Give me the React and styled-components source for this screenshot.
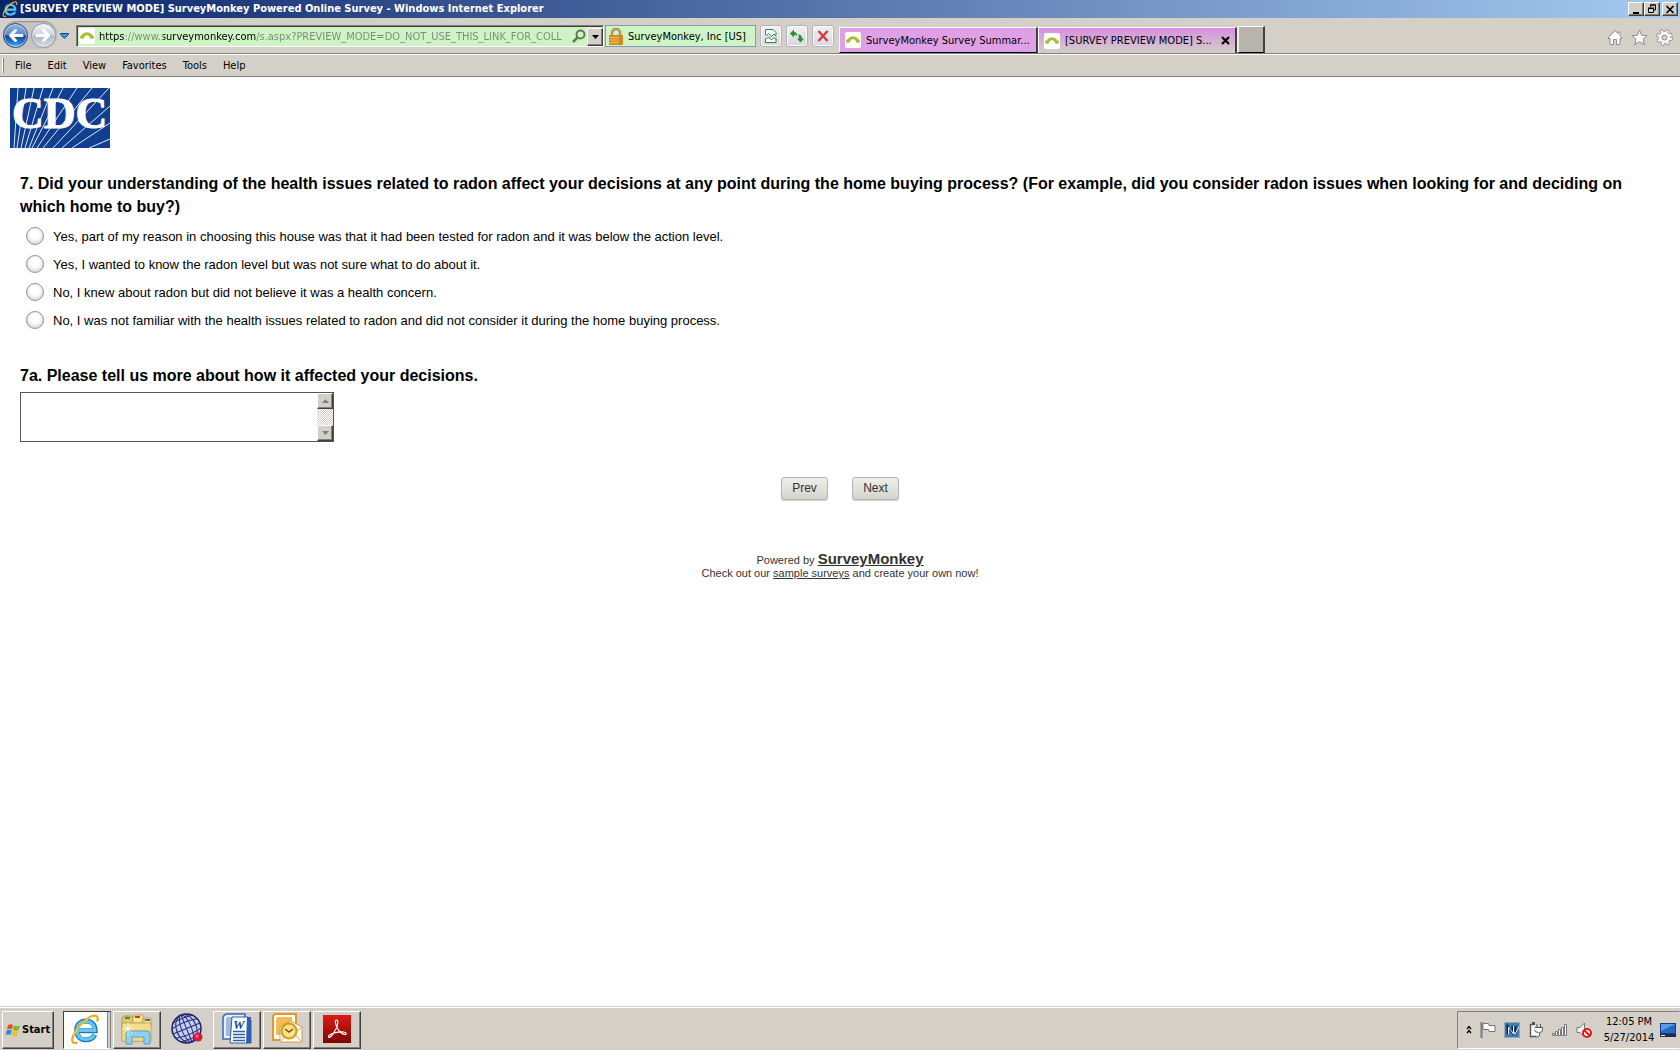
import React, { useState } from 'react';
import styled, { createGlobalStyle, css } from 'styled-components';

const GlobalStyle = createGlobalStyle`
  *, *::before, *::after {
    box-sizing: border-box;
  }

  body {
    margin: 0;
    background: #fff;
    color: #000;
    font-family: "Liberation Sans", Arial, sans-serif;
  }

  button, input, textarea {
    font: inherit;
    color: inherit;
    margin: 0;
  }

  svg {
    display: block;
    flex: none;
  }
`;

const tahoma = css`
  font-family: "DejaVu Sans Condensed", Tahoma, sans-serif;
`;

const raised = css`
  background: #d4d0c8;
  border: 1px solid;
  border-color: #fff #404040 #404040 #fff;
  box-shadow: inset -1px -1px 0 #808080;
`;

const Window = styled.div`
  display: flex;
  flex-direction: column;
  min-height: 100vh;
`;

const TitleBar = styled.header`
  ${tahoma}
  display: flex;
  align-items: center;
  height: 18px;
  padding: 0 2px;
  background: linear-gradient(90deg, #0a246a, #a6caf0);
  color: #fff;
`;

const WindowTitle = styled.h1`
  flex: 1;
  margin: 0 0 0 2px;
  font-size: 11px;
  line-height: 18px;
  white-space: nowrap;
`;

const CaptionButton = styled.button`
  ${raised}
  display: flex;
  align-items: center;
  justify-content: center;
  width: 16px;
  height: 14px;
  padding: 0;
  margin-left: ${props => (props.$apart ? '2px' : '0')};
`;

const NavBar = styled.div`
  ${tahoma}
  display: flex;
  align-items: flex-start;
  height: 36px;
  padding: 0 7px 0 3px;
  background: #d4d0c8;
  border-bottom: 1px solid #808080;
  font-size: 11px;
`;

const TravelButtons = styled.div`
  display: flex;
  align-items: center;
  gap: 3px;
  height: 28px;
  margin-top: 3px;
  padding-right: 1px;
  border-radius: 14px;
  background: #c6c4c2;
  box-shadow: inset 0 1px 1px #8e8e8e;
`;

const TravelButton = styled.button`
  display: flex;
  align-items: center;
  justify-content: center;
  width: 25px;
  height: 25px;
  padding: 0;
  border: 1px solid ${props => (props.$active ? '#2b4775' : '#8b95a3')};
  border-radius: 50%;
  background: ${props =>
    props.$active
      ? 'linear-gradient(#8fb4dc 0%, #5f8dcb 45%, #12439e 52%, #2d86d4 85%, #6cc4f2 100%)'
      : 'linear-gradient(#f4f6f8 0%, #cfd4dc 45%, #b0b7c3 52%, #d8dde5 100%)'};
  box-shadow: inset 0 0 0 1px rgba(255, 255, 255, 0.5);
`;

const HistoryButton = styled.button`
  width: 18px;
  height: 28px;
  margin: 4px 1px 0 0;
  padding: 0 3px;
  border: 0;
  background: none;
`;

const AddressBox = styled.div`
  display: flex;
  align-items: center;
  flex: 0 0 528px;
  height: 22px;
  margin-top: 7px;
  padding-left: 2px;
  border: 1px solid;
  border-color: #808080 #fff #fff #808080;
  box-shadow: inset 1px 1px 0 #404040;
  background: #cef3c4;
`;

/* host name is dark, the rest of the address is dimmed */
const AddressInput = styled.input`
  flex: 1;
  min-width: 0;
  height: 18px;
  margin: 0 6px 0 4px;
  padding: 0;
  border: 0;
  outline: none;
  color: transparent;
  background: linear-gradient(
    90deg,
    #000 26px, #7c8a78 26px,
    #7c8a78 64px, #000 64px,
    #000 157px, #7c8a78 157px
  );
  background-clip: text;
  -webkit-background-clip: text;
`;

const PlainIconButton = styled.button`
  display: flex;
  align-items: center;
  justify-content: center;
  padding: 0;
  border: 0;
  background: none;
`;

const DropButton = styled.button`
  ${raised}
  display: flex;
  align-items: center;
  justify-content: center;
  width: 16px;
  height: 18px;
  margin: 1px 0 0 1px;
  padding: 0;
`;

const Certificate = styled.button`
  display: flex;
  align-items: center;
  gap: 5px;
  flex: 0 0 151px;
  height: 22px;
  margin: 7px 4px 0 1px;
  padding: 0 3px;
  border: 1px solid #7f9db9;
  background: #cef3c4;
  white-space: nowrap;
`;

const ToolButton = styled.button`
  display: flex;
  align-items: center;
  justify-content: center;
  flex: none;
  width: 22px;
  height: 22px;
  margin: 7px 4px 0 0;
  padding: 0;
  border: 1px solid #b3b5bb;
  border-radius: 3px;
  background: linear-gradient(#f2f2f3, #e3e4e8 50%, #d6d9e0);
  box-shadow: inset 0 0 0 1px #fafafa;
`;

const Tabs = styled.div`
  display: flex;
  align-items: flex-end;
  height: 35px;
  margin-left: 1px;
  flex: 1;
`;

const Tab = styled.div`
  display: flex;
  align-items: center;
  width: 199px;
  height: 26px;
  padding: 0 5px;
  border: 1px solid;
  border-width: 1px 2px ${props => (props.$active ? '0' : '1px')} 1px;
  border-color: #fff #404040 #000 #fff;
  background: ${props => (props.$active ? 'linear-gradient(#d78fe0, #d4d0c8)' : '#dfa0e6')};
`;

const TabLabel = styled.button`
  display: flex;
  align-items: center;
  gap: 5px;
  flex: 1;
  min-width: 0;
  height: 24px;
  padding: 0;
  border: 0;
  background: none;
  text-align: left;

  span {
    overflow: hidden;
    text-overflow: ellipsis;
    white-space: nowrap;
  }
`;

const NewTab = styled.button`
  width: 28px;
  height: 27px;
  padding: 0;
  border: 2px solid;
  border-width: 1px 2px 1px 2px;
  border-color: #fff #404040 #000 #f0eeea;
  background: #b8b3ab;
`;

const CommandIcons = styled.div`
  display: flex;
  gap: 8px;
  margin-top: 11px;
`;

const MenuBar = styled.nav`
  ${tahoma}
  display: flex;
  align-items: center;
  height: 23px;
  padding-left: 2px;
  background: #d4d0c8;
  border-top: 1px solid #fff;
  border-bottom: 1px solid #808080;
  font-size: 11px;
`;

const Grip = styled.span`
  width: 2px;
  height: 15px;
  margin-right: 3px;
  border-right: 1px solid #808080;
  border-left: 1px solid #fff;
`;

const MenuItem = styled.button`
  padding: 0 8px;
  border: 0;
  background: none;
  line-height: 20px;
`;

const Page = styled.main`
  flex: 1;
  padding: 11px 0 20px;
`;

const Logo = styled.svg`
  margin-left: 10px;
`;

const Form = styled.form`
  padding: 24px 20px 0;
`;

const Question = styled.fieldset`
  min-width: 0;
  margin: 0 0 30px;
  padding: 0;
  border: 0;
`;

const QuestionTitle = styled.legend`
  padding: 0;
  margin-bottom: 4px;
  font-size: 16px;
  font-weight: 700;
  line-height: 23px;
`;

const Option = styled.label`
  display: flex;
  align-items: center;
  gap: 9px;
  height: 28px;
  padding-left: 6px;
  font-size: 13px;
`;

const Radio = styled.input`
  appearance: none;
  width: 18px;
  height: 18px;
  border: 1px solid #929292;
  border-radius: 50%;
  background: radial-gradient(circle at 50% 40%, #fff 35%, #dcdcdc 75%);

  &:checked {
    background: radial-gradient(circle, #444 30%, #f2f2f2 35%);
  }
`;

const TextLabel = styled.label`
  display: block;
  margin-bottom: 5px;
  font-size: 16px;
  font-weight: 700;
  line-height: 23px;
`;

const CommentBox = styled.div`
  display: flex;
  width: 314px;
  height: 50px;
  border: 1px solid #555;
`;

const CommentInput = styled.textarea`
  flex: 1;
  min-width: 0;
  padding: 2px;
  border: 0;
  outline: none;
  resize: none;
  overflow: hidden;
  font-size: 13px;
`;

const ScrollTrack = styled.div`
  display: flex;
  flex-direction: column;
  justify-content: space-between;
  width: 16px;
  background: repeating-conic-gradient(#d4d0c8 0 25%, #fff 0 50%) 0 0 / 2px 2px;
`;

const ScrollButton = styled.button`
  ${raised}
  display: flex;
  align-items: center;
  justify-content: center;
  width: 16px;
  height: 16px;
  padding: 0;
`;

const Actions = styled.div`
  display: flex;
  justify-content: center;
  gap: 24px;
  margin-top: 35px;
`;

const ActionButton = styled.button`
  width: 47px;
  height: 23px;
  padding: 0 0 2px;
  border: 1px solid #b4b5ae;
  border-radius: 3px;
  background: linear-gradient(#eeefe9, #d3d4cb);
  box-shadow: 0 1px 1px #ccc;
  color: #333;
  font-size: 12px;
`;

const Footer = styled.footer`
  margin-top: 52px;
  color: #333;
  font-size: 11px;
  line-height: 13px;
  text-align: center;

  p {
    margin: 0;
  }

  a {
    color: #333;
  }
`;

const BrandLink = styled.a`
  font-size: 15px;
  font-weight: 700;
`;

const TaskBar = styled.div`
  ${tahoma}
  display: flex;
  align-items: center;
  gap: 2px;
  height: 44px;
  padding: 3px 0 1px 2px;
  border-top: 1px solid #d4d0c8;
  box-shadow: inset 0 1px 0 #fff;
  background: #d4d0c8;
`;

const StartButton = styled.button`
  ${raised}
  display: flex;
  align-items: center;
  gap: 1px;
  width: 52px;
  height: 38px;
  margin-right: 7px;
  padding: 0 2px;
  font-size: 11px;
  font-weight: 700;
`;

const TaskButton = styled.button`
  ${props => !props.$flat && raised}
  display: flex;
  align-items: center;
  justify-content: center;
  width: 48px;
  height: 38px;
  padding: 0 0 2px;
  ${props => props.$flat && css`
    border: 0;
    background: none;
  `}
  ${props => props.$open && css`
    padding-right: 4px;
    background: #fff;
    border-color: #404040 #808080 #fff #404040;
    box-shadow: inset -2px 0 0 #d4d0c8, inset -3px 0 0 #808080;
  `}
`;

const Spacer = styled.div`
  flex: 1;
`;

const Tray = styled.div`
  display: flex;
  align-items: center;
  gap: 5px;
  height: 38px;
  padding: 0 3px 0 8px;
  border: 1px solid;
  border-color: #808080 transparent #fff #808080;
`;

const TrayGroup = styled.div`
  display: flex;
  align-items: center;
  gap: 8px;
  margin-right: 6px;
`;

const Clock = styled.time`
  width: 52px;
  font-size: 11px;
  line-height: 16px;
  text-align: center;
  white-space: nowrap;
`;

const IeLogo = ({ size }) => (
  <svg width={size} height={size} viewBox="0 0 32 32" aria-hidden="true">
    <path d="M26.500 22C24.500 26 21 27.500 17 27.500 11 27.500 7.200 23.500 7.200 17.500S11 7.500 17 7.500s9.800 4.400 9.800 10.400H8" fill="none" stroke="#1f7ab8" strokeWidth="5.400" />
    <path d="M26 22C24.500 25.500 21 27 17 27 11 27 7.700 23.500 7.700 17.500S11 8 17 8s9.300 4.400 9.300 9.400H8" fill="none" stroke="#66c6f1" strokeWidth="3.400" />
    <path d="M8 30C3.500 33 .8 29.500 3.500 23 7.500 14 17 4.500 24.500 2c4.500-1.300 6 1.400 4.500 6" fill="none" stroke="#e9ad12" strokeWidth="2.400" />
    <path d="M4 23C8 14.500 17 5 24.500 2.500" fill="none" stroke="#fbdc66" strokeWidth="1" />
  </svg>
);

const MonkeyIcon = () => (
  <svg width="16" height="16" viewBox="0 0 16 16" aria-hidden="true">
    <rect width="16" height="16" rx="2" fill="#fff" />
    <path d="M3.500 10.500C4 4 12 4 12.500 10.500" fill="none" stroke="#a9bf33" strokeWidth="3" />
    <circle cx="2.700" cy="9" r="1.700" fill="#a9bf33" />
    <circle cx="13.300" cy="9" r="1.700" fill="#a9bf33" />
  </svg>
);

const ArrowIcon = ({ flip }) => (
  <svg width="17" height="15" viewBox="0 0 17 15" aria-hidden="true">
    <g transform={flip ? 'matrix(-1 0 0 1 17 0)' : undefined}>
      <path d="M15 7.500H4M8.500 2.500l-5 5 5 5" fill="none" stroke="#fff" strokeWidth="3" strokeLinecap="round" strokeLinejoin="round" />
    </g>
  </svg>
);

const DownTriangle = ({ width = 7, color = '#000', up }) => (
  <svg width={width} height="4" viewBox="0 0 7 4" aria-hidden="true">
    <path d={up ? 'M0 4L3.500 0 7 4z' : 'M0 0h7L3.500 4z'} fill={color} />
  </svg>
);

const LockIcon = () => (
  <svg width="14" height="17" viewBox="0 0 14 17" aria-hidden="true">
    <path d="M3 8V5a4 4 0 0 1 8 0v3" fill="none" stroke="#8f7136" strokeWidth="2.400" />
    <path d="M3 8V5a4 4 0 0 1 8 0v3" fill="none" stroke="#d8bd79" strokeWidth="1" />
    <rect y="7" width="14" height="10" rx="1" fill="#d28c22" />
    <path d="M1 9.500h12M1 12h12M1 14.500h12" stroke="#f4c564" />
    <path d="M10 8h3v8h-3z" fill="#b56f10" opacity=".5" />
  </svg>
);

const HomeIcon = () => (
  <svg width="16" height="17" viewBox="0 0 16 17" aria-hidden="true">
    <path d="M8 1.500L1 9l1 1 1-.8V15.500h3.500v-5h3v5H13V9.200l1 .8 1-1-2-2.200V3h-2v1.700z" fill="#fff" stroke="#8d8d8d" />
  </svg>
);

const StarIcon = () => (
  <svg width="17" height="17" viewBox="0 0 17 17" aria-hidden="true">
    <path d="M8.500 1l2.100 5.300 5.600.3-4.300 3.600 1.400 5.500-4.800-3.100-4.800 3.100 1.400-5.500L.8 6.600l5.600-.3z" fill="#fff" stroke="#8d8d8d" />
  </svg>
);

const GearIcon = () => (
  <svg width="17" height="17" viewBox="0 0 17 17" aria-hidden="true">
    <circle cx="8.500" cy="8.500" r="6.400" fill="none" stroke="#8d8d8d" strokeWidth="4" strokeDasharray="3 2.027" />
    <circle cx="8.500" cy="8.500" r="6" fill="#fff" stroke="#8d8d8d" />
    <circle cx="8.500" cy="8.500" r="6.200" fill="none" stroke="#fff" strokeWidth="2.600" strokeDasharray="2 2.870" strokeDashoffset="-.5" />
    <circle cx="8.500" cy="8.500" r="2.600" fill="#d4d0c8" stroke="#8d8d8d" />
  </svg>
);

const CdcLogo = () => (
  <Logo width="100" height="60" viewBox="0 0 100 60" role="img" aria-label="CDC">
    <rect width="100" height="60" fill="#103f91" />
    <g stroke="#dfe7f5" strokeWidth="1">
      <path d="M4 60L8 0M7 60L16 0M11 60L24 0M15 60L33 0M19 60L43 0M22 60L53 0M27 60L67 0M33 60L82 0M43 60L99 0M52 60L100 18M62 60L100 35M79 60L100 51" />
    </g>
    <text x="2" y="40" fill="#fff" stroke="#fff" strokeWidth="1" fontFamily="Liberation Serif, serif" fontWeight="700" fontSize="44">CDC</text>
  </Logo>
);

const FolderIcon = () => (
  <svg width="34" height="32" viewBox="0 0 34 32" aria-hidden="true">
    <path d="M2 5l2-2h8l2 3h16v22H2z" fill="#e5c46d" stroke="#b9923b" />
    <path d="M13 5l1-3h8l2 3v5H13zM22 7l1-2h8v8h-9z" fill="#f8e6a0" stroke="#c7a24c" />
    <path d="M5 4h5v2H5z" fill="#27a04a" />
    <path d="M15 3h5v2h-5z" fill="#d33a2b" />
    <path d="M25 6h5v2h-5z" fill="#2d75cf" />
    <path d="M2 10h29v18H2z" fill="#f6dd8a" stroke="#c9a650" />
    <path d="M2 16h29v12H2z" fill="#efd27a" opacity=".7" />
    <path d="M6 31V21q0-3 3-3h18q3 0 3 3v10h-6v-7H12v7z" fill="#8fd0ee" stroke="#5a9fc6" />
    <path d="M8 10v13M2 16h12M4 12l8 8M12 12l-8 8" stroke="#fff" strokeWidth=".7" />
  </svg>
);

const GlobeIcon = () => (
  <svg width="32" height="32" viewBox="0 0 32 32" aria-hidden="true">
    <circle cx="15.500" cy="15.500" r="14.500" fill="#c4cdec" stroke="#1c2163" strokeWidth="1.500" />
    <g fill="none" stroke="#252b78" transform="rotate(-22 15.500 15.500)">
      <ellipse cx="15.500" cy="15.500" rx="5" ry="14.500" />
      <ellipse cx="15.500" cy="15.500" rx="10" ry="14.500" />
      <path d="M15.500 1v29M1 15.500h29M2 10.500q13.500-3 27 0M2 20.500q13.500 3 27 0M5 5.500q10.500-2 21 0M5 25.500q10.500 2 21 0" />
    </g>
    <circle cx="27" cy="24" r="4.500" fill="#db1740" />
    <circle cx="26" cy="23" r="1.500" fill="#ff6b84" />
  </svg>
);

const WordIcon = () => (
  <svg width="32" height="32" viewBox="0 0 32 32" aria-hidden="true">
    <path d="M7 1h17l-3 25H2V6q0-5 5-5z" fill="#eaf0f9" stroke="#3c67ad" strokeWidth="1.500" />
    <path d="M7 4h12l-2 19H5V7q0-3 2-3z" fill="#9dbbe4" />
    <path d="M11 4h16l3 3v23H9z" fill="#fff" stroke="#2e5aa2" />
    <path d="M26 4h4v26h-5z" fill="#2e5fb2" />
    <path d="M12 18.500h12M12 21.500h12M12 24.500h12M12 27.500h12" stroke="#2f5cab" strokeWidth="1.500" />
    <text x="12" y="16" fill="#1c479c" fontFamily="Liberation Serif, serif" fontSize="13" fontStyle="italic" fontWeight="700">W</text>
  </svg>
);

const OutlookIcon = () => (
  <svg width="32" height="32" viewBox="0 0 32 32" aria-hidden="true">
    <path d="M5 1h20v26H2V5q0-4 3-4z" fill="#fff" stroke="#e49a22" strokeWidth="2" />
    <path d="M6 4h15v18H5V7z" fill="#f5bb57" />
    <path d="M9 14l11-6 11 6v15H9z" fill="#fffdf3" stroke="#c9a054" />
    <path d="M10 28l7-8M30 28l-7-8M31 14l-9 7" fill="none" stroke="#d3ad63" />
    <circle cx="18" cy="18" r="7.500" fill="#fae28d" stroke="#d79b12" strokeWidth="2" />
    <path d="M14 16l4 3 4-3" fill="none" stroke="#6e541f" strokeWidth="1.500" />
  </svg>
);

const AcrobatIcon = () => (
  <svg width="28" height="28" viewBox="0 0 28 28" aria-hidden="true">
    <defs>
      <linearGradient id="acrobat" x2="0" y2="1">
        <stop offset="0" stopColor="#dc1c14" />
        <stop offset="1" stopColor="#7e0503" />
      </linearGradient>
    </defs>
    <rect width="28" height="28" fill="url(#acrobat)" />
    <path d="M13.500 5c-2 0-1 4.500 1 8.500 2 3.500 6 6.500 8 6 2-.8-.5-3-5-2.700-5 .3-11 2.200-12 4.400-.4 2 2 1.500 4-1.500C12 16 15.500 9 14.700 6c-.2-.7-.5-1-1.200-1z" fill="none" stroke="#fff" strokeWidth="1.200" />
  </svg>
);

const WindowsIcon = () => (
  <svg width="16" height="16" viewBox="0 0 16 16" aria-hidden="true">
    <path d="M3 3q2.500-1.500 5 0L7 7.500q-2.500-1.300-5 0z" fill="#e35520" />
    <path d="M9 3.400q2.500 1.400 6 0L13.500 8Q11 9.400 8 8z" fill="#7aba28" />
    <path d="M1.700 8.500q2.500-1.400 5 0L5.500 13Q3 11.600.5 13z" fill="#2a8bd8" />
    <path d="M7.600 9q2.800 1.300 5.700 0L12 13.500q-2.700 1.300-5.500 0z" fill="#f5bd1f" />
  </svg>
);

const TrayIcons = () => (
  <TrayGroup>
    <svg width="6" height="9" viewBox="0 0 6 9" aria-hidden="true">
      <path d="M1 4l2-2.500L5 4M1 8l2-2.500L5 8" fill="none" stroke="#000" strokeWidth="1.300" />
    </svg>
    <svg width="16" height="16" viewBox="0 0 16 16" aria-hidden="true">
      <path d="M1.500 0v16" stroke="#777" strokeWidth="2" />
      <path d="M3 1.500h5.500l.5 2h6v6H9l-.5-2H3z" fill="#fff" stroke="#777" />
    </svg>
    <svg width="16" height="16" viewBox="0 0 16 16" aria-hidden="true">
      <rect x=".5" y=".5" width="15" height="15" fill="#3c7cae" stroke="#90abc0" />
      <path d="M3.500 12V4l5 7V4M11.500 4v8" fill="none" stroke="#0b2548" strokeWidth="2" />
      <path d="M4.500 12V5l5 7V4M9 9l2 3 4-7" fill="none" stroke="#e4f1fa" />
    </svg>
    <svg width="16" height="16" viewBox="0 0 16 16" aria-hidden="true">
      <path d="M7 2.500H2.500v12H9" fill="#fff" stroke="#555" strokeWidth="1.400" />
      <path d="M4 1h3" stroke="#555" strokeWidth="2" />
      <path d="M6.500 5.500h8v2q0 3-3 3v2.500q0 2-3 2M9 2v3.500M12.500 2v3.500M6.500 7.500q0 3 4 3" fill="#fff" stroke="#555" />
    </svg>
    <svg width="16" height="16" viewBox="0 0 16 16" aria-hidden="true">
      <path d="M.5 11.500h2v2h-2zM3.500 9.500h2v4h-2zM6.500 7.500h2v6h-2zM9.500 5.500h2v8h-2zM12.500 2.500h2v11h-2z" fill="#fff" stroke="#777" />
    </svg>
    <svg width="16" height="16" viewBox="0 0 16 16" aria-hidden="true">
      <path d="M1 5.500h3L8.500 1v14L4 10.500H1z" fill="#f5f5f5" stroke="#777" />
      <circle cx="11" cy="11" r="4" fill="#fff" stroke="#df1c14" strokeWidth="2" />
      <path d="M8 8l6 6" stroke="#df1c14" strokeWidth="2" />
    </svg>
  </TrayGroup>
);

const options = [
  'Yes, part of my reason in choosing this house was that it had been tested for radon and it was below the action level.',
  'Yes, I wanted to know the radon level but was not sure what to do about it.',
  'No, I knew about radon but did not believe it was a health concern.',
  'No, I was not familiar with the health issues related to radon and did not consider it during the home buying process.'
];

const menus = ['File', 'Edit', 'View', 'Favorites', 'Tools', 'Help'];

const tasks = [
  { name: 'Internet Explorer', icon: <IeLogo size={30} />, open: true },
  { name: 'Windows Explorer', icon: <FolderIcon /> },
  { name: 'Network', icon: <GlobeIcon />, flat: true },
  { name: 'Word', icon: <WordIcon /> },
  { name: 'Outlook', icon: <OutlookIcon /> },
  { name: 'Adobe Reader', icon: <AcrobatIcon /> }
];

function Browser() {
  const [url, setUrl] = useState(
    'https://www.surveymonkey.com/s.aspx?PREVIEW_MODE=DO_NOT_USE_THIS_LINK_FOR_COLL'
  );

  return (
    <>
      <TitleBar>
        <IeLogo size={16} />
        <WindowTitle>
          [SURVEY PREVIEW MODE] SurveyMonkey Powered Online Survey - Windows Internet Explorer
        </WindowTitle>
        <CaptionButton aria-label="Minimize">
          <svg width="10" height="9" viewBox="0 0 10 9"><path d="M2 7h6v2H2z" /></svg>
        </CaptionButton>
        <CaptionButton aria-label="Restore">
          <svg width="10" height="10" viewBox="0 0 10 10">
            <path d="M3.500 3V1h5v5h-2M3 1h6M1.500 4.500h5v4h-5zM1 4h6" fill="none" stroke="#000" />
          </svg>
        </CaptionButton>
        <CaptionButton $apart aria-label="Close">
          <svg width="10" height="9" viewBox="0 0 10 9">
            <path d="M1.500 1l7 7M8.500 1l-7 7" stroke="#000" strokeWidth="1.700" />
          </svg>
        </CaptionButton>
      </TitleBar>

      <NavBar>
        <TravelButtons>
          <TravelButton $active aria-label="Back"><ArrowIcon /></TravelButton>
          <TravelButton aria-label="Forward"><ArrowIcon flip /></TravelButton>
        </TravelButtons>
        <HistoryButton aria-label="Recent pages">
          <svg width="9" height="6" viewBox="0 0 9 6">
            <path d="M.5.500h8v1l-4 4-4-4z" fill="#2ba0df" stroke="#174a85" />
          </svg>
        </HistoryButton>

        <AddressBox>
          <MonkeyIcon />
          <AddressInput aria-label="Address" value={url} onChange={e => setUrl(e.target.value)} />
          <PlainIconButton aria-label="Search">
            <svg width="14" height="14" viewBox="0 0 14 14">
              <circle cx="8.500" cy="5.500" r="4" fill="none" stroke="#60785a" strokeWidth="2" />
              <path d="M5.500 8.500L1 13" stroke="#60785a" strokeWidth="2.500" />
            </svg>
          </PlainIconButton>
          <DropButton aria-label="Show address list"><DownTriangle /></DropButton>
        </AddressBox>

        <Certificate>
          <LockIcon />
          <span>SurveyMonkey, Inc [US]</span>
        </Certificate>

        <ToolButton aria-label="Compatibility view">
          <svg width="12" height="14" viewBox="0 0 12 14">
            <path d="M.5 6V.5h7.500l3 3V6M.5 9.500v4h10.500v-4" fill="#fff" stroke="#2d8a35" />
            <path d="M1 7l2.500-2.500L6.500 7.500 9 5l2.500 2.500M1 10.500L3.500 8l3 3L9 8.500l2.500 2" fill="none" stroke="#2d8a35" />
          </svg>
        </ToolButton>
        <ToolButton aria-label="Refresh">
          <svg width="14" height="14" viewBox="0 0 14 14">
            <path d="M0 4.500L4 .5V3q3 0 3 3.500Q6 6 4 6v2.500zM14 9.500l-3.500 4L7 9.500h2Q9 7 8 5.500q4 0 4 4z" fill="#24932a" />
          </svg>
        </ToolButton>
        <ToolButton aria-label="Stop">
          <svg width="12" height="12" viewBox="0 0 12 12">
            <path d="M1.500 1l9 10M10.500 1l-9 10" stroke="#cf3d3f" strokeWidth="2.400" />
          </svg>
        </ToolButton>

        <Tabs>
          <Tab>
            <TabLabel>
              <MonkeyIcon />
              <span>SurveyMonkey Survey Summar...</span>
            </TabLabel>
          </Tab>
          <Tab $active>
            <TabLabel>
              <MonkeyIcon />
              <span>[SURVEY PREVIEW MODE] S...</span>
            </TabLabel>
            <PlainIconButton aria-label="Close tab">
              <svg width="9" height="9" viewBox="0 0 9 9">
                <path d="M1 1l7 7M8 1L1 8" stroke="#000" strokeWidth="2.200" />
              </svg>
            </PlainIconButton>
          </Tab>
          <NewTab aria-label="New tab" />
        </Tabs>

        <CommandIcons>
          <PlainIconButton aria-label="Home"><HomeIcon /></PlainIconButton>
          <PlainIconButton aria-label="Favorites"><StarIcon /></PlainIconButton>
          <PlainIconButton aria-label="Settings"><GearIcon /></PlainIconButton>
        </CommandIcons>
      </NavBar>

      <MenuBar>
        <Grip />
        {menus.map(menu => (
          <MenuItem key={menu}>{menu}</MenuItem>
        ))}
      </MenuBar>
    </>
  );
}

function Survey() {
  const [answer, setAnswer] = useState(null);

  return (
    <Page>
      <CdcLogo />
      <Form onSubmit={e => e.preventDefault()}>
        <Question>
          <QuestionTitle>
            7. Did your understanding of the health issues related to radon affect your decisions at any point
            during the home buying process? (For example, did you consider radon issues when looking for and
            deciding on which home to buy?)
          </QuestionTitle>
          {options.map((option, index) => (
            <Option key={option}>
              <Radio
                type="radio"
                name="decision"
                checked={answer === index}
                onChange={() => setAnswer(index)}
              />
              {option}
            </Option>
          ))}
        </Question>

        <TextLabel htmlFor="comment">7a. Please tell us more about how it affected your decisions.</TextLabel>
        <CommentBox>
          <CommentInput id="comment" />
          <ScrollTrack>
            <ScrollButton type="button" aria-label="Scroll up"><DownTriangle up color="#808080" /></ScrollButton>
            <ScrollButton type="button" aria-label="Scroll down"><DownTriangle color="#808080" /></ScrollButton>
          </ScrollTrack>
        </CommentBox>

        <Actions>
          <ActionButton type="button">Prev</ActionButton>
          <ActionButton type="submit">Next</ActionButton>
        </Actions>
      </Form>

      <Footer>
        <p>Powered by <BrandLink href="#">SurveyMonkey</BrandLink></p>
        <p>Check out our <a href="#">sample surveys</a> and create your own now!</p>
      </Footer>
    </Page>
  );
}

function App() {
  return (
    <Window>
      <GlobalStyle />
      <Browser />
      <Survey />
      <TaskBar>
        <StartButton>
          <WindowsIcon />
          Start
        </StartButton>
        {tasks.map(task => (
          <TaskButton key={task.name} aria-label={task.name} $open={task.open} $flat={task.flat}>
            {task.icon}
          </TaskButton>
        ))}
        <Spacer />
        <Tray>
          <TrayIcons />
          <Clock>
            12:05 PM
            <br />
            5/27/2014
          </Clock>
          <svg width="16" height="14" viewBox="0 0 16 14" aria-hidden="true">
            <rect x=".5" y=".5" width="15" height="10" fill="#2868c5" stroke="#123d80" />
            <path d="M1 1h14L1 8z" fill="#5c9ae6" />
            <path d="M0 11h16v3H0z" fill="#202d42" />
            <path d="M1 12h4v1H1z" fill="#e8f0fa" />
          </svg>
        </Tray>
      </TaskBar>
    </Window>
  );
}

export default App;
